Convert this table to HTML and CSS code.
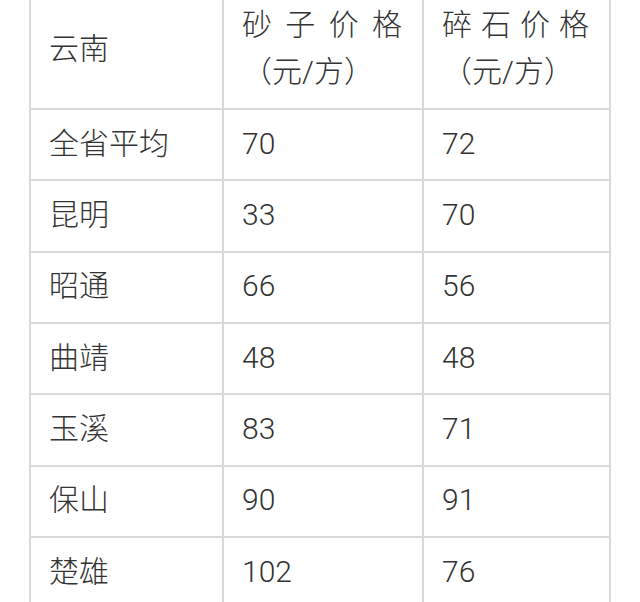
FILE: index.html
```html
<!DOCTYPE html>
<html lang="zh-CN">
<head>
<meta charset="utf-8">
<link rel="stylesheet" href="styles.css">
</head>
<body>
<table class="price-table">
  <thead>
    <tr>
      <th class="c1">云南</th>
      <th class="c2">砂子价格（元/方）</th>
      <th class="c3">碎石价格（元/方）</th>
    </tr>
  </thead>
  <tbody>
    <tr><td class="c1">全省平均</td><td class="c2">70</td><td class="c3">72</td></tr>
    <tr><td class="c1">昆明</td><td class="c2">33</td><td class="c3">70</td></tr>
    <tr><td class="c1">昭通</td><td class="c2">66</td><td class="c3">56</td></tr>
    <tr><td class="c1">曲靖</td><td class="c2">48</td><td class="c3">48</td></tr>
    <tr><td class="c1">玉溪</td><td class="c2">83</td><td class="c3">71</td></tr>
    <tr><td class="c1">保山</td><td class="c2">90</td><td class="c3">91</td></tr>
    <tr><td class="c1">楚雄</td><td class="c2">102</td><td class="c3">76</td></tr>
  </tbody>
</table>
</body>
</html>
```
FILE: styles.css
```css
html, body {
  margin: 0;
  padding: 0;
  background: #ffffff;
  overflow: hidden;
}
body {
  font-family: "Roboto", "Noto Sans CJK SC", "Noto Sans", sans-serif;
  color: #333333;
}
.price-table {
  margin: -10.5px 0 0 29px;
  border-collapse: separate;
  border-spacing: 0;
  border-left: 2px solid #d9d9d9;
  border-top: 2px solid #d9d9d9;
  table-layout: fixed;
  width: 582px;
}
.price-table th,
.price-table td {
  font-size: 30px;
  font-weight: 300;
  line-height: 47.33px;
  padding: 9.5px 20px 12.5px 18px;
  border-right: 2px solid #d9d9d9;
  border-bottom: 2px solid #d9d9d9;
  text-align: justify;
  vertical-align: middle;
  box-sizing: border-box;
}
.price-table th {
  text-align: justify;
  text-align-last: left;
}
.c1 { width: 193px; }
.c2 { width: 200px; }
.c3 { width: 187px; }
```
